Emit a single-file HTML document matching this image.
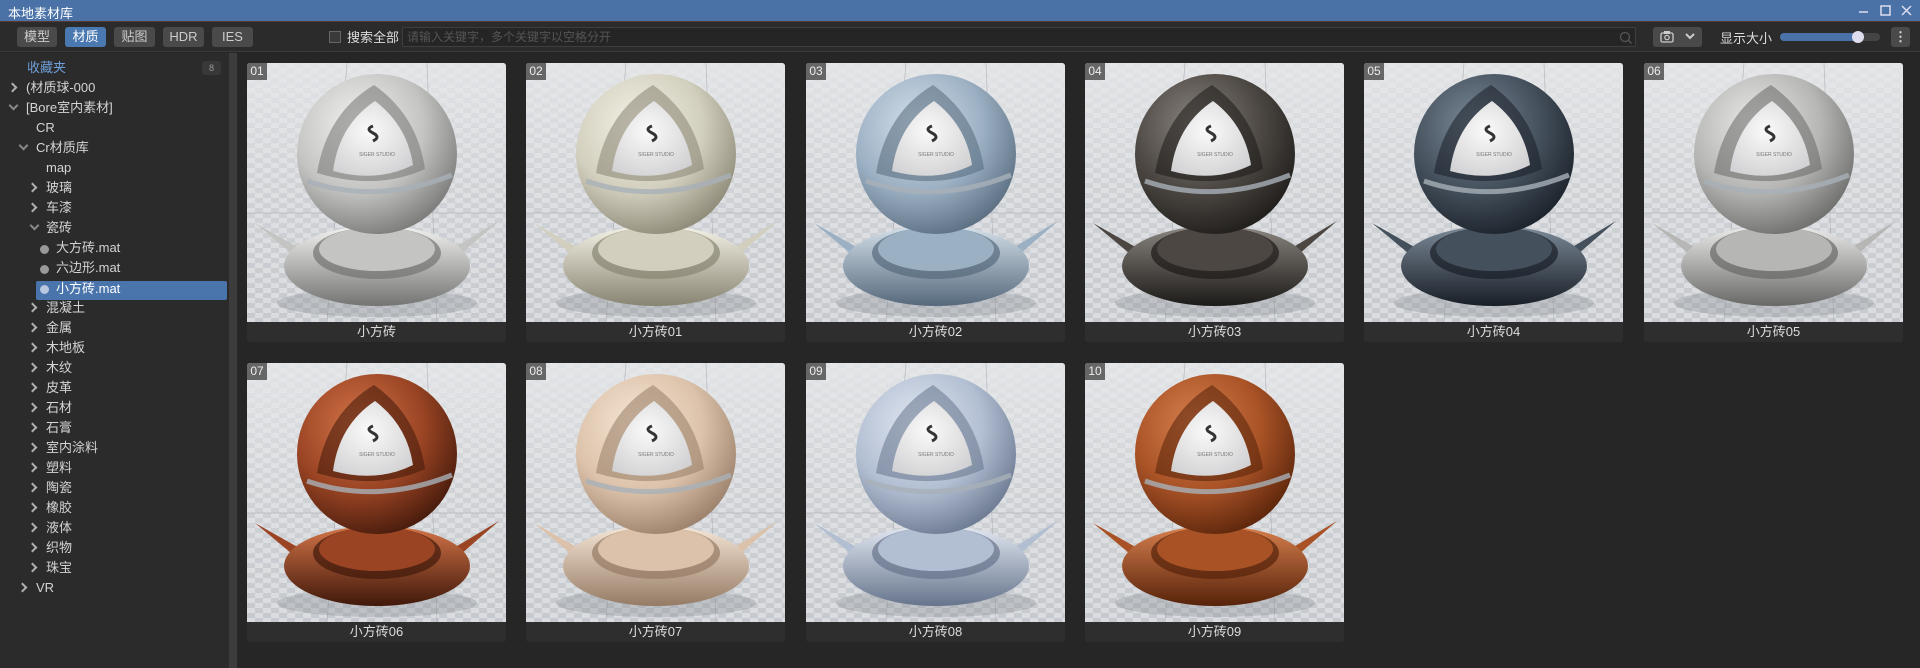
<!DOCTYPE html>
<html><head><meta charset="utf-8"><style>
*{margin:0;padding:0;box-sizing:border-box}
body{width:1920px;height:668px;background:#262626;font-family:"Liberation Sans","Noto Sans CJK SC",sans-serif;color:#d8d8d8;overflow:hidden;position:relative}
.abs{position:absolute}
.title{left:0;top:0;width:1920px;height:22px;background:#4a72a6;border-bottom:1px solid #5a3a30}
.title span{position:absolute;left:8px;top:3px;font-size:13px;color:#fff}
.tb{left:0;top:22px;width:1920px;height:30px;background:#2b2b2b;border-bottom:1px solid #3a3a3a}
.btn{position:absolute;top:5px;height:20px;background:#4a4a4a;border-radius:3px;font-size:13px;color:#ccc;text-align:center;line-height:20px}
.btn.on{background:#4a78b0;color:#fff}
.side{left:0;top:53px;width:229px;height:615px;background:#2b2b2b}
.sb{left:229px;top:53px;width:8px;height:615px;background:#3c3c3c}
.it{position:absolute;font-size:13px;color:#d4d4d4;height:20px;line-height:20px;white-space:nowrap}
.ch{position:absolute;width:7px;height:7px;border-right:2px solid #b0b0b0;border-bottom:2px solid #b0b0b0;transform:rotate(-45deg)}
.ch.d{transform:rotate(45deg);border-color:#888}
.card{position:absolute;width:259px;height:279px;background:#2e2e2e;border-radius:3px;overflow:hidden}
.card svg{position:absolute;left:0;top:0}
.card .lb{position:absolute;left:0;top:259px;width:259px;height:20px;text-align:center;font-size:13px;color:#ddd;line-height:20px}
.card .no{position:absolute;left:0;top:0;width:20px;height:17px;background:rgba(80,80,80,.85);color:#eee;font-size:12px;line-height:17px;text-align:center}
</style></head><body>
<div class="abs title"><span>本地素材库</span>
<svg class="abs" style="left:1857px;top:4px" width="60" height="14"><path d="M2 8h9" stroke="#dde" stroke-width="1.5"/><rect x="24" y="2" width="9" height="9" fill="none" stroke="#dde" stroke-width="1.5"/><path d="M45 2l9 9M54 2l-9 9" stroke="#dde" stroke-width="1.5"/></svg></div>
<div class="abs tb">
<div class="btn" style="left:17px;width:40px">模型</div>
<div class="btn on" style="left:65px;width:41px">材质</div>
<div class="btn" style="left:114px;width:41px">贴图</div>
<div class="btn" style="left:163px;width:41px">HDR</div>
<div class="btn" style="left:212px;width:41px">IES</div>
<div class="abs" style="left:329px;top:9px;width:12px;height:12px;border:1px solid #666;background:#3a3a3a"></div>
<div class="abs" style="left:347px;top:5px;font-size:13px;color:#ddd">搜索全部</div>
<div class="abs" style="left:402px;top:5px;width:1234px;height:20px;border:1px solid #3e3e3e;background:#252525;border-radius:2px;font-size:12px;color:#555;padding-left:4px;line-height:18px">请输入关键字，多个关键字以空格分开</div>
<svg class="abs" style="left:1619px;top:9px" width="14" height="14"><circle cx="6" cy="6" r="4.5" fill="none" stroke="#555" stroke-width="1.3"/><path d="M9.5 9.5l3 3" stroke="#555" stroke-width="1.3"/></svg>
<div class="btn" style="left:1653px;width:49px"></div>
<svg class="abs" style="left:1660px;top:8px" width="40" height="14"><rect x="1" y="3" width="12" height="9" rx="1.5" fill="none" stroke="#ccc" stroke-width="1.3"/><rect x="4" y="1" width="6" height="3" fill="#ccc"/><circle cx="7" cy="7.5" r="2.2" fill="none" stroke="#ccc" stroke-width="1.2"/><path d="M26 4l4 4 4-4" fill="none" stroke="#ccc" stroke-width="2"/></svg>
<div class="abs" style="left:1720px;top:6px;font-size:13px;color:#ddd">显示大小</div>
<div class="abs" style="left:1780px;top:11px;width:100px;height:8px;border-radius:4px;background:#444"></div>
<div class="abs" style="left:1780px;top:11px;width:80px;height:8px;border-radius:4px;background:#4a72a8"></div>
<div class="abs" style="left:1852px;top:9px;width:12px;height:12px;border-radius:6px;background:#dde"></div>
<div class="btn" style="left:1891px;width:19px;font-weight:bold;color:#ddd">⋮</div>
</div>
<div class="abs side">
<div class="it" style="left:27px;top:5px;color:#6f9fd8">收藏夹</div>
<div class="abs" style="left:202px;top:8px;width:19px;height:14px;background:#383838;border-radius:3px;font-size:9px;color:#999;text-align:center;line-height:14px">8</div>
<div class="ch" style="left:9px;top:31px"></div><div class="it" style="left:26px;top:25px">(材质球-000</div>
<div class="ch d" style="left:10px;top:49px"></div><div class="it" style="left:26px;top:45px">[Bore室内素材]</div>
<div class="it" style="left:36px;top:65px">CR</div>
<div class="ch d" style="left:20px;top:89px"></div><div class="it" style="left:36px;top:85px">Cr材质库</div>
<div class="it" style="left:46px;top:105px">map</div>
<div class="ch" style="left:29px;top:131px"></div><div class="it" style="left:46px;top:125px">玻璃</div>
<div class="ch" style="left:29px;top:151px"></div><div class="it" style="left:46px;top:145px">车漆</div>
<div class="ch d" style="left:31px;top:169px"></div><div class="it" style="left:46px;top:165px">瓷砖</div>
<div class="abs" style="left:40px;top:192px;width:9px;height:9px;border-radius:5px;background:#999"></div><div class="it" style="left:56px;top:185px">大方砖.mat</div>
<div class="abs" style="left:40px;top:212px;width:9px;height:9px;border-radius:5px;background:#999"></div><div class="it" style="left:56px;top:205px">六边形.mat</div>
<div class="abs" style="left:36px;top:228px;width:191px;height:19px;background:#4a74ac;border-radius:2px"></div>
<div class="abs" style="left:40px;top:232px;width:9px;height:9px;border-radius:5px;background:#b8c8e0"></div><div class="it" style="left:56px;top:226px;color:#fff">小方砖.mat</div>
<div class="ch" style="left:29px;top:251px"></div><div class="it" style="left:46px;top:245px">混凝土</div>
<div class="ch" style="left:29px;top:271px"></div><div class="it" style="left:46px;top:265px">金属</div>
<div class="ch" style="left:29px;top:291px"></div><div class="it" style="left:46px;top:285px">木地板</div>
<div class="ch" style="left:29px;top:311px"></div><div class="it" style="left:46px;top:305px">木纹</div>
<div class="ch" style="left:29px;top:331px"></div><div class="it" style="left:46px;top:325px">皮革</div>
<div class="ch" style="left:29px;top:351px"></div><div class="it" style="left:46px;top:345px">石材</div>
<div class="ch" style="left:29px;top:371px"></div><div class="it" style="left:46px;top:365px">石膏</div>
<div class="ch" style="left:29px;top:391px"></div><div class="it" style="left:46px;top:385px">室内涂料</div>
<div class="ch" style="left:29px;top:411px"></div><div class="it" style="left:46px;top:405px">塑料</div>
<div class="ch" style="left:29px;top:431px"></div><div class="it" style="left:46px;top:425px">陶瓷</div>
<div class="ch" style="left:29px;top:451px"></div><div class="it" style="left:46px;top:445px">橡胶</div>
<div class="ch" style="left:29px;top:471px"></div><div class="it" style="left:46px;top:465px">液体</div>
<div class="ch" style="left:29px;top:491px"></div><div class="it" style="left:46px;top:485px">织物</div>
<div class="ch" style="left:29px;top:511px"></div><div class="it" style="left:46px;top:505px">珠宝</div>
<div class="ch" style="left:19px;top:531px"></div><div class="it" style="left:36px;top:525px">VR</div>
</div>
<div class="abs sb"></div>
<svg width="0" height="0" style="position:absolute"><defs>
<pattern id="chk" width="16" height="10" patternUnits="userSpaceOnUse"><rect width="16" height="10" fill="#dadcdf"/><rect width="8" height="5" fill="#c6c9cd"/><rect x="8" y="5" width="8" height="5" fill="#c6c9cd"/></pattern>
<linearGradient id="fade" x1="0" y1="0" x2="0" y2="1"><stop offset="0" stop-color="#e6e8ea" stop-opacity=".85"/><stop offset=".5" stop-color="#e6e8ea" stop-opacity=".3"/><stop offset="1" stop-color="#e6e8ea" stop-opacity="0"/></linearGradient>
<radialGradient id="win" cx=".45" cy=".4" r=".7"><stop offset="0" stop-color="#fafafa"/><stop offset="1" stop-color="#d0d0d2"/></radialGradient>
</defs></svg>
<div id="cards"></div>
<script>
var cols=[["#f2f2f0","#c4c4c2","#747472"],["#f4f2e6","#d2cfbe","#888472"],["#d4e0ea","#9cb0c4","#56697c"],["#8a857f","#4c4742","#1c1a18"],["#7c8a98","#44505c","#181e26"],["#ebebea","#b6b6b4","#686866"],["#d47448","#9a4424","#40180a"],["#f6e6d6","#dcc2aa","#957b65"],["#e2e8f2","#b2bed2","#66748c"],["#d8804e","#a85226","#56220a"]];
var names=["小方砖","小方砖01","小方砖02","小方砖03","小方砖04","小方砖05","小方砖06","小方砖07","小方砖08","小方砖09"];
var h="";
for(var i=0;i<10;i++){var r=Math.floor(i/6),c=i%6;var x=Math.round(247+c*279.3),y=r?363:63;var k=cols[i];
h+='<div class="card" style="left:'+x+'px;top:'+y+'px"><svg width="259" height="259" viewBox="0 0 259 259"><defs><radialGradient id="s'+i+'" cx=".38" cy=".32" r=".75"><stop offset="0" stop-color="'+k[0]+'"/><stop offset=".55" stop-color="'+k[1]+'"/><stop offset="1" stop-color="'+k[2]+'"/></radialGradient><linearGradient id="b'+i+'" x1="0" y1="0" x2="0" y2="1"><stop offset="0" stop-color="'+k[0]+'"/><stop offset="1" stop-color="'+k[2]+'"/></linearGradient></defs>'+
'<rect width="259" height="259" fill="url(#chk)"/><rect width="259" height="259" fill="url(#fade)"/>'+
'<path d="M100 0L80 259M180 0L190 259M0 150H259" stroke="#9a9ea4" stroke-width=".7" opacity=".6"/>'+
'<ellipse cx="130" cy="240" rx="100" ry="14" fill="#8a8e94" opacity=".35"/>'+
'<path d="M8 160L70 195L62 205Z" fill="'+k[1]+'"/><path d="M252 158L190 195L198 205Z" fill="'+k[1]+'"/>'+
'<ellipse cx="130" cy="203" rx="93" ry="40" fill="url(#b'+i+')"/>'+
'<ellipse cx="130" cy="190" rx="64" ry="26" fill="'+k[2]+'" opacity=".7"/>'+
'<ellipse cx="130" cy="186" rx="58" ry="22" fill="'+k[1]+'"/>'+
'<circle cx="130" cy="91" r="80" fill="url(#s'+i+')"/>'+
'<path d="M60 118Q130 142 205 112" fill="none" stroke="#a8b0b8" stroke-width="5" opacity=".8"/>'+
'<path d="M127 22Q80 50 70 110Q130 128 178 106Q170 52 127 22Z" fill="'+k[2]+'" opacity=".55"/>'+
'<path d="M128 38Q92 62 86 108Q130 120 166 102Q160 62 128 38Z" fill="url(#win)"/>'+
'<path d="M126 63q-8 3 0 7q8 4 0 8" fill="none" stroke="#333" stroke-width="3"/>'+
'<text x="130" y="93" font-size="5" fill="#777" text-anchor="middle" font-family="Liberation Sans">SIGER STUDIO</text>'+
'</svg><div class="no">'+(i<9?'0'+(i+1):'10')+'</div><div class="lb">'+names[i]+'</div></div>';}
document.getElementById("cards").innerHTML=h;
</script>
</body></html>
